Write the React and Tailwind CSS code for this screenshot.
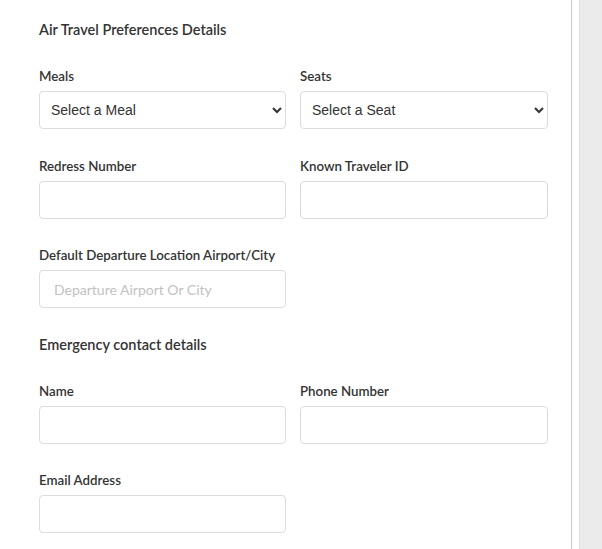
import { useState } from "react";

function Field({ label, children }) {
  return (
    <div className="mb-[26.5px]">
      <label className="block text-[13.3px] leading-5 font-semibold text-[#333] mb-[5px]">{label}</label>
      {children}
    </div>
  );
}

function TextInput({ placeholder }) {
  return (
    <input
      type="text"
      placeholder={placeholder}
      className="block w-full h-[38px] px-[14px] rounded border border-[#dcdcdc] bg-white text-sm text-[#333] placeholder:text-[#c2c2c2] outline-none"
    />
  );
}

function Select({ value, onChange, placeholder, options }) {
  return (
    <select
      value={value}
      onChange={e => onChange(e.target.value)}
      className="block w-full h-[38px] pl-[7px] pr-2 rounded border border-[#dcdcdc] bg-white text-sm text-[#333] outline-none font-['Liberation_Sans',Arial,sans-serif]"
    >
      <option value="">{placeholder}</option>
      {options.map(o => (
        <option key={o} value={o}>{o}</option>
      ))}
    </select>
  );
}

export default function App() {
  const [meal, setMeal] = useState("");
  const [seat, setSeat] = useState("");

  return (
    <div className="flex h-[549px] bg-white font-['Lato','Open_Sans',sans-serif] overflow-hidden">
      {/* Form panel */}
      <div className="w-[572px] shrink-0 border-r border-[#c8c8c8] pl-[39px] pt-5">
        <h3 className="text-[14.5px] leading-5 font-semibold text-[#333] mb-[26px]">
          Air Travel Preferences Details
        </h3>

        <div className="grid grid-cols-[247px_248px] gap-x-[14px]">
          <Field label="Meals">
            <Select
              value={meal}
              onChange={setMeal}
              placeholder="Select a Meal"
              options={["Vegetarian", "Vegan", "Kosher", "Halal"]}
            />
          </Field>
          <Field label="Seats">
            <Select
              value={seat}
              onChange={setSeat}
              placeholder="Select a Seat"
              options={["Window", "Aisle", "Middle"]}
            />
          </Field>

          <Field label="Redress Number">
            <TextInput />
          </Field>
          <Field label="Known Traveler ID">
            <TextInput />
          </Field>

          <Field label="Default Departure Location Airport/City">
            <TextInput placeholder="Departure Airport Or City" />
          </Field>
          <div />
        </div>

        <h3 className="text-[14.5px] leading-5 font-semibold text-[#333] mb-[26px]">
          Emergency contact details
        </h3>

        <div className="grid grid-cols-[247px_248px] gap-x-[14px]">
          <Field label="Name">
            <TextInput />
          </Field>
          <Field label="Phone Number">
            <TextInput />
          </Field>
          <Field label="Email Address">
            <TextInput />
          </Field>
          <div />
        </div>
      </div>

      {/* Scroll track */}
      <div className="w-[7px] shrink-0 bg-white" />
      <div className="grow border-l border-[#e0e0e0] bg-[#ebebeb]" />
    </div>
  );
}
